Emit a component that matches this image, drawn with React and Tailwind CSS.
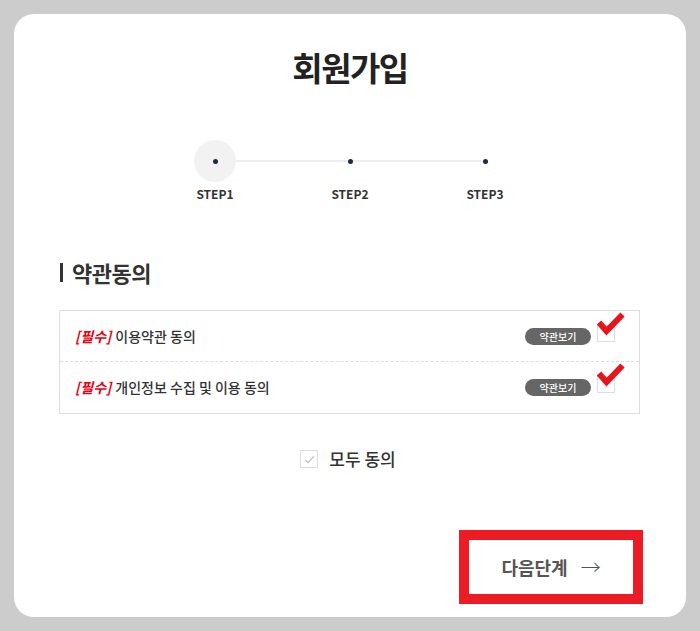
import React from "react";

const FONT = "font-['Noto_Sans_CJK_KR','Noto_Sans',sans-serif]";

const steps = ["STEP1", "STEP2", "STEP3"];

const terms = [
  { label: "이용약관 동의" },
  { label: "개인정보 수집 및 이용 동의" },
];

const RedCheck = () => (
  <svg
    className="absolute left-[-1px] top-[-14px] w-[30px] h-[30px]"
    viewBox="0 0 30 30"
    fill="none"
  >
    <path
      d="M2 10.5 L9.5 19 L25.5 2.5"
      stroke="#e8141c"
      strokeWidth="6"
      strokeLinejoin="miter"
      strokeLinecap="butt"
    />
  </svg>
);

const TermRow = ({ label, last }) => (
  <div
    className={`flex items-center h-[51px] pl-[15px] pr-[24px] ${
      last ? "" : "border-b border-dashed border-[#dddddd]"
    }`}
  >
    <span className="text-[14px] font-bold italic text-[#e60012] mr-[4px]">
      [필수]
    </span>
    <span className="text-[14px] font-medium text-[#333333]">{label}</span>
    <div className="ml-auto flex items-center gap-[6px]">
      <span className="w-[66px] h-[17px] rounded-full bg-[#666666] text-white text-[10px] font-medium leading-[17px] text-center">
        약관보기
      </span>
      <span className="relative w-[18px] h-[17px] -mt-[6px] border border-[#dddddd] bg-white">
        <RedCheck />
      </span>
    </div>
  </div>
);

const App = () => {
  return (
    <div className={`min-h-screen bg-[#cccccc] p-[14px] ${FONT}`}>
      <div className="h-[603px] rounded-[20px] bg-white flex flex-col px-[45px]">
        <h1 className="pt-[33px] text-center text-[33px] leading-[40px] font-bold tracking-[-1.5px] text-[#222222]">
          회원가입
        </h1>

        <div className="mt-[53px] mx-auto w-[405px]">
          <div className="relative grid grid-cols-3 h-[42px]">
            <div className="absolute left-[88px] right-[67px] top-[20px] h-[2px] bg-[#eeeeee]" />
            {steps.map((s, i) => (
              <div key={s} className="relative flex items-center justify-center">
                {i === 0 && (
                  <div className="absolute w-[42px] h-[42px] rounded-full bg-[#f2f2f2]" />
                )}
                <div className="relative w-[5px] h-[5px] rounded-full bg-[#1b2a45]" />
              </div>
            ))}
          </div>
          <div className="grid grid-cols-3 mt-[4px]">
            {steps.map((s) => (
              <span
                key={s}
                className="text-center text-[12px] leading-[16px] font-bold text-[#333333]"
              >
                {s}
              </span>
            ))}
          </div>
        </div>

        <div className="mt-[56px] flex items-center gap-[9px] pl-[1px]">
          <span className="w-[3px] h-[19px] bg-[#333333]" />
          <h2 className="text-[22px] leading-[28px] font-bold tracking-[-0.5px] text-[#333333]">
            약관동의
          </h2>
        </div>

        <div className="mt-[24px] border border-[#dddddd] w-[581px]">
          {terms.map((t, i) => (
            <TermRow key={t.label} label={t.label} last={i === terms.length - 1} />
          ))}
        </div>

        <div className="mt-[35px] flex items-center justify-center gap-[11px] h-[20px] pr-[4px]">
          <span className="w-[18px] h-[18px] border border-[#dddddd] flex items-center justify-center">
            <svg viewBox="0 0 12 12" className="w-[11px] h-[11px]" fill="none">
              <path d="M1.5 6.5 L4.5 9.5 L10.5 2.5" stroke="#bbbbbb" strokeWidth="1.3" />
            </svg>
          </span>
          <span className="text-[17px] font-medium text-[#333333]">모두 동의</span>
        </div>

        <div className="mt-[61px] flex justify-end -mr-[2px]">
          <button className="w-[184px] h-[74px] border-[10px] border-[#ed1c24] bg-white flex items-center justify-center gap-[13px] text-[18px] font-bold text-[#555555]">
            <span>다음단계</span>
            <span className="font-light text-[20px] leading-none">→</span>
          </button>
        </div>
      </div>
    </div>
  );
};

export default App;
